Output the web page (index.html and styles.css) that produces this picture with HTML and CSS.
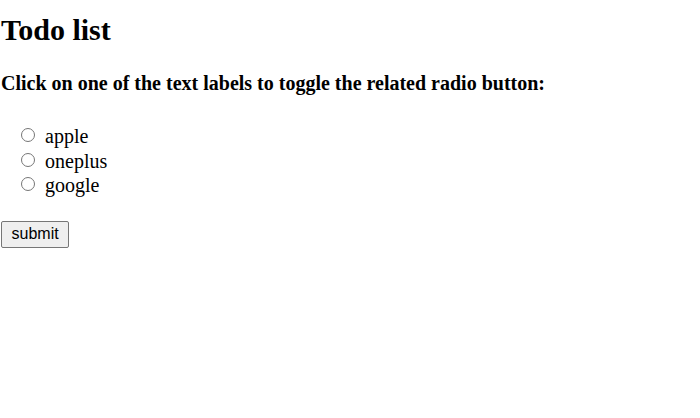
FILE: index.html
```html
<!DOCTYPE html>
<html>
<head>
<meta charset="utf-8">
<title>Todo list</title>
<link rel="stylesheet" href="styles.css">
</head>
<body>
<h1 class="title">Todo list</h1>
<h3 class="subtitle">Click on one of the text labels to toggle the related radio button:</h3>
<form class="form">
  <div class="options">
    <label class="option"><input class="radio" type="radio" name="brand" value="apple"> apple</label>
    <label class="option"><input class="radio" type="radio" name="brand" value="oneplus"> oneplus</label>
    <label class="option"><input class="radio" type="radio" name="brand" value="google"> google</label>
  </div>
  <button class="submit" type="button">submit</button>
</form>
</body>
</html>
```
FILE: styles.css
```css
html, body {
  background: #fff;
}
body {
  margin: 0;
  padding: 1px;
  font-family: "Liberation Serif", "Times New Roman", serif;
  color: #000;
}
.title {
  font-size: 30px;
  font-weight: bold;
  margin: 11.5px 0 0 0;
  line-height: normal;
}
.subtitle {
  font-size: 20px;
  font-weight: bold;
  margin: 25.4px 0 0 0;
  line-height: normal;
}
.form {
  margin: 0;
}
.options {
  padding-left: 15px;
  margin-top: 29.5px;
  font-size: 20px;
}
.option {
  display: block;
  line-height: 24.5px;
}
.radio {
  -webkit-appearance: none;
  appearance: none;
  box-sizing: border-box;
  margin: 0 5px 0 5px;
  width: 14px;
  height: 14px;
  border: 1px solid #767676;
  border-radius: 50%;
  background: #fff;
  vertical-align: 1px;
}
.radio:checked {
  background: radial-gradient(circle, #0075ff 0 3px, #fff 3.5px);
  border-color: #0075ff;
}
.submit {
  margin-top: 23px;
  font-family: "Liberation Sans", Arial, sans-serif;
  font-size: 16px;
  padding: 3.5px 9.5px;
  border: 1px solid #767676;
  border-radius: 2px;
  background: #efefef;
  color: #000;
  line-height: normal;
}
```
